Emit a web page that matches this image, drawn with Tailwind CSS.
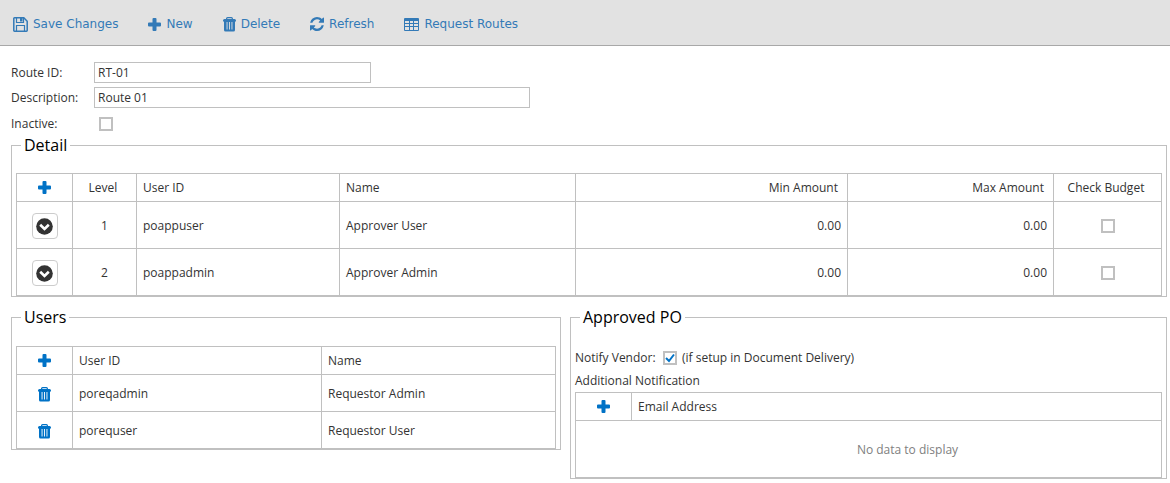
<!DOCTYPE html>
<html lang="en">
<head>
  <meta charset="UTF-8" />
  <meta name="viewport" content="width=device-width, initial-scale=1.0" />
  <script src="https://cdn.jsdelivr.net/npm/@tailwindcss/browser@4"></script>
  <title>Route RT-01</title>
</head>
<body class="bg-white font-['Open_Sans',sans-serif] text-[12px] leading-4 text-[#333]">
  <!-- shared icons -->
  <svg class="hidden">
    <symbol id="plus" viewBox="0 0 13 13">
      <path fill="currentColor" d="M5.500 0h2q1 0 1 1v3.500H12q1 0 1 1v2q0 1-1 1H8.500V12q0 1-1 1h-2q-1 0-1-1V8.500H1q-1 0-1-1v-2q0-1 1-1h3.500V1q0-1 1-1z" />
    </symbol>
    <symbol id="trash" viewBox="0 0 13 15">
      <path fill="none" stroke="currentColor" stroke-width="1.200" d="M3.600 2.500V1.700q0-1 1-1h3.800q1 0 1 1v.8" />
      <path fill="currentColor" fill-rule="evenodd" d="M1.500 2h10q1.500 0 1.500 1.500V4.500h-1V13q0 1.500-1.500 1.500h-8Q1 14.500 1 13V4.500H0v-1Q0 2 1.500 2zM3.600 5v7.500h.9V5zM6.050 5v7.500h.9V5zM8.500 5v7.500h.9V5z" />
    </symbol>
    <symbol id="chevron" viewBox="0 0 17 17">
      <circle cx="8.500" cy="8.500" r="8.300" fill="currentColor" />
      <path fill="none" stroke="#fff" stroke-width="2.600" d="M4.200 6.700l4.300 4.200 4.300-4.200" />
    </symbol>
  </svg>

  <nav class="flex h-[46px] items-center gap-[30px] border-b border-[#a8a8a8] bg-[#e2e2e2] pt-[3px] pl-[13px] font-['DejaVu_Sans',sans-serif] text-[12px] text-[#337ab7]">
    <button type="button" class="flex items-center gap-[5px]">
      <svg class="size-[15px]" viewBox="0 0 15 15" fill="none" stroke="currentColor">
        <path stroke-width="1.500" d="M1.500.8h9.300l3.400 3.400v9.300q0 .7-.7.7h-12q-.7 0-.7-.7v-12q0-.7.7-.7z" />
        <path stroke-width="1.200" d="M3.500.8v4.700h7V.8M3.500 14V8.500h8V14" />
        <path fill="currentColor" stroke="none" d="M7 1h2.500v3.500H7z" />
      </svg>
      Save Changes
    </button>
    <button type="button" class="flex items-center gap-[5px]">
      <svg class="size-[13px]"><use href="#plus" /></svg>
      New
    </button>
    <button type="button" class="flex items-center gap-[5px]">
      <svg class="h-[15px] w-[13px]"><use href="#trash" /></svg>
      Delete
    </button>
    <button type="button" class="flex items-center gap-[5px]">
      <svg class="size-[14px]" viewBox="128 128 1536 1536" fill="currentColor">
        <path d="M1639 1056q0 5-1 7-64 268-268 434.500t-478 166.500q-146 0-282.500-55t-243.500-157l-129 129q-19 19-45 19t-45-19-19-45v-448q0-26 19-45t45-19h448q26 0 45 19t19 45-19 45l-137 137q71 66 161 102t187 36q134 0 250-65t186-179q11-17 53-117 8-23 30-23h192q13 0 22.500 9.500t9.500 22.500zm25-800v448q0 26-19 45t-45 19h-448q-26 0-45-19t-19-45 19-45l138-138q-148-137-349-137-134 0-250 65t-186 179q-11 17-53 117-8 23-30 23h-199q-13 0-22.500-9.500t-9.500-22.500v-7q65-268 270-434.500t480-166.500q146 0 284 55.500t245 156.500l130-129q19-19 45-19t45 19 19 45z" />
      </svg>
      Refresh
    </button>
    <button type="button" class="flex items-center gap-[5px]">
      <svg class="h-[13px] w-[15px]" viewBox="0 0 15 13">
        <path fill="currentColor" fill-rule="evenodd" d="M1 0h13q1 0 1 1v11q0 1-1 1H1q-1 0-1-1V1q0-1 1-1zM1 3v2h4V3zM6 3v2h3V3zM10 3v2h4V3zM1 6v2h4V6zM6 6v2h3V6zM10 6v2h4V6zM1 9v3h4V9zM6 9v3h3V9zM10 9v3h4V9z" />
      </svg>
      Request Routes
    </button>
  </nav>

  <main class="pt-4 pr-[3px] pl-[11px]">
    <div class="flex flex-col gap-1">
      <div class="flex items-center">
        <label for="routeId" class="w-[83px]">Route ID:</label>
        <input id="routeId" type="text" value="RT-01" class="h-[21px] w-[277px] border border-[#c0c0c0] px-[3px]" />
      </div>
      <div class="flex items-center">
        <label for="description" class="w-[83px]">Description:</label>
        <input id="description" type="text" value="Route 01" class="h-[21px] w-[436px] border border-[#c0c0c0] px-[3px]" />
      </div>
      <div class="flex h-[23px] items-center pt-px">
        <label for="inactive" class="w-[88px]">Inactive:</label>
        <input id="inactive" type="checkbox" class="size-[14px] appearance-none border-2 border-[#c0c0c0]" />
      </div>
    </div>

    <fieldset class="border border-[#c0c0c0] px-1 pt-[17px]">
      <legend class="ml-[5px] px-[3px] text-[16px] leading-[21px] text-black">Detail</legend>
      <table class="w-full table-fixed border-collapse [&_td]:border [&_td]:border-[#c0c0c0] [&_td]:px-[6px] [&_td]:pt-[2px] [&_th]:border [&_th]:border-[#c0c0c0] [&_th]:px-[6px] [&_th]:font-normal">
        <thead>
          <tr class="h-[28px] text-left">
            <th class="w-[56px] text-[#0072c6]"><button type="button" aria-label="Add level" class="mx-auto block"><svg class="size-[13px]"><use href="#plus" /></svg></button></th>
            <th class="w-[64px]"><div class="pr-[3px] text-center">Level</div></th>
            <th class="w-[203px]">User ID</th>
            <th class="w-[236px]">Name</th>
            <th><div class="pr-[3px] text-right">Min Amount</div></th>
            <th class="w-[206px]"><div class="pr-[3px] text-right">Max Amount</div></th>
            <th class="w-[108px]"><div class="pr-[3px] text-center">Check Budget</div></th>
          </tr>
        </thead>
        <tbody>
          <tr class="h-[47px]">
            <td><button type="button" aria-label="Level 1 options" class="mx-auto flex size-[26px] items-center justify-center rounded border border-[#ccc]"><svg class="size-[17px]"><use href="#chevron" /></svg></button></td>
            <td class="text-center">1</td>
            <td>poappuser</td>
            <td>Approver User</td>
            <td class="text-right">0.00</td>
            <td class="text-right">0.00</td>
            <td><input type="checkbox" aria-label="Check Budget, level 1" class="mx-auto block size-[14px] appearance-none border-2 border-[#c0c0c0]" /></td>
          </tr>
          <tr class="h-[47px]">
            <td><button type="button" aria-label="Level 2 options" class="mx-auto flex size-[26px] items-center justify-center rounded border border-[#ccc]"><svg class="size-[17px]"><use href="#chevron" /></svg></button></td>
            <td class="text-center">2</td>
            <td>poappadmin</td>
            <td>Approver Admin</td>
            <td class="text-right">0.00</td>
            <td class="text-right">0.00</td>
            <td><input type="checkbox" aria-label="Check Budget, level 2" class="mx-auto block size-[14px] appearance-none border-2 border-[#c0c0c0]" /></td>
          </tr>
        </tbody>
      </table>
    </fieldset>

    <div class="mt-[10px] grid grid-cols-[550fr_597fr] items-start gap-[9px]">
      <fieldset class="border border-[#c0c0c0] px-1 pt-[18px]">
        <legend class="ml-[5px] px-[3px] text-[16px] leading-[21px] text-black">Users</legend>
        <table class="w-full table-fixed border-collapse [&_td]:border [&_td]:border-[#c0c0c0] [&_td]:px-[6px] [&_td]:pt-[2px] [&_th]:border [&_th]:border-[#c0c0c0] [&_th]:px-[6px] [&_th]:font-normal">
          <thead>
            <tr class="h-[28px] text-left">
              <th class="w-[56px] text-[#0072c6]"><button type="button" aria-label="Add user" class="mx-auto block"><svg class="size-[13px]"><use href="#plus" /></svg></button></th>
              <th class="w-[249px]">User ID</th>
              <th>Name</th>
            </tr>
          </thead>
          <tbody>
            <tr class="h-[37px]">
              <td class="text-[#0072c6]"><button type="button" aria-label="Delete poreqadmin" class="mx-auto block"><svg class="h-[15px] w-[13px]"><use href="#trash" /></svg></button></td>
              <td>poreqadmin</td>
              <td>Requestor Admin</td>
            </tr>
            <tr class="h-[37px]">
              <td class="text-[#0072c6]"><button type="button" aria-label="Delete porequser" class="mx-auto block"><svg class="h-[15px] w-[13px]"><use href="#trash" /></svg></button></td>
              <td>porequser</td>
              <td>Requestor User</td>
            </tr>
          </tbody>
        </table>
      </fieldset>

      <fieldset class="border border-[#c0c0c0] px-1 pt-[20px]">
        <legend class="ml-[5px] px-[3px] text-[16px] leading-[21px] text-black">Approved PO</legend>
        <div class="flex h-[20px] items-center">
          <label for="notifyVendor" class="w-[88px]">Notify Vendor:</label>
          <span class="grid">
            <input id="notifyVendor" type="checkbox" checked class="peer col-start-1 row-start-1 size-[14px] appearance-none border-2 border-[#c0c0c0]" />
            <svg class="pointer-events-none invisible col-start-1 row-start-1 size-[14px] text-[#0072c6] peer-checked:visible" viewBox="0 0 14 14" fill="none" stroke="currentColor" stroke-width="2"><path d="M3 7l3 3 5-6.500" /></svg>
          </span>
          <span class="ml-[5px]">(if setup in Document Delivery)</span>
        </div>
        <p class="mt-[5px] mb-[3px]">Additional Notification</p>
        <table class="w-full table-fixed border-collapse [&_td]:border [&_td]:border-[#c0c0c0] [&_td]:px-[6px] [&_td]:pt-[2px] [&_th]:border [&_th]:border-[#c0c0c0] [&_th]:px-[6px] [&_th]:font-normal">
          <thead>
            <tr class="h-[28px] text-left">
              <th class="w-[56px] text-[#0072c6]"><button type="button" aria-label="Add email address" class="mx-auto block"><svg class="size-[13px]"><use href="#plus" /></svg></button></th>
              <th>Email Address</th>
            </tr>
          </thead>
          <tbody>
            <tr class="h-[57px]">
              <td colspan="2"><div class="pl-[78px] text-center text-[#808080]">No data to display</div></td>
            </tr>
          </tbody>
        </table>
      </fieldset>
    </div>
  </main>
</body>
</html>
